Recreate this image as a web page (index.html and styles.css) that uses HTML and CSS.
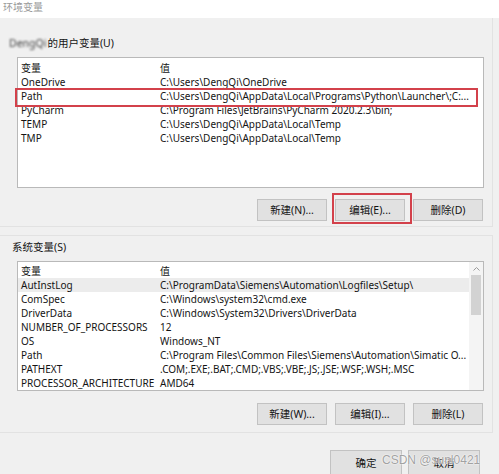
FILE: index.html
```html
<!DOCTYPE html>
<html lang="zh-CN">
<head>
<meta charset="utf-8">
<title>环境变量</title>
<link rel="stylesheet" href="styles.css">
</head>
<body>
<div class="titlebar">环境变量</div>

<section class="group group-user">
  <div class="glabel"><span class="blurname">DengQi</span>的用户变量(U)</div>
  <div class="list list-user">
    <div class="rows">
      <div class="row head"><span>变量</span><span>值</span></div>
      <div class="row"><span>OneDrive</span><span>C:\Users\DengQi\OneDrive</span></div>
      <div class="row marked"><span>Path</span><span>C:\Users\DengQi\AppData\Local\Programs\Python\Launcher\;C:...</span></div>
      <div class="row"><span>PyCharm</span><span>C:\Program Files\JetBrains\PyCharm 2020.2.3\bin;</span></div>
      <div class="row"><span>TEMP</span><span>C:\Users\DengQi\AppData\Local\Temp</span></div>
      <div class="row"><span>TMP</span><span>C:\Users\DengQi\AppData\Local\Temp</span></div>
    </div>
  </div>
  <div class="btns">
    <button class="btn">新建(N)...</button>
    <button class="btn marked-btn">编辑(E)...</button>
    <button class="btn">删除(D)</button>
  </div>
</section>

<section class="group group-sys">
  <div class="glabel">系统变量(S)</div>
  <div class="list list-sys">
    <div class="rows">
      <div class="row head"><span>变量</span><span>值</span></div>
      <div class="row hl"><span>AutInstLog</span><span>C:\ProgramData\Siemens\Automation\Logfiles\Setup\</span></div>
      <div class="row"><span>ComSpec</span><span>C:\Windows\system32\cmd.exe</span></div>
      <div class="row"><span>DriverData</span><span>C:\Windows\System32\Drivers\DriverData</span></div>
      <div class="row"><span>NUMBER_OF_PROCESSORS</span><span>12</span></div>
      <div class="row"><span>OS</span><span>Windows_NT</span></div>
      <div class="row"><span>Path</span><span>C:\Program Files\Common Files\Siemens\Automation\Simatic O...</span></div>
      <div class="row"><span>PATHEXT</span><span>.COM;.EXE;.BAT;.CMD;.VBS;.VBE;.JS;.JSE;.WSF;.WSH;.MSC</span></div>
      <div class="row"><span>PROCESSOR_ARCHITECTURE</span><span>AMD64</span></div>
    </div>
    <div class="scrollbar">
      <div class="sb-arrow"><svg width="7" height="4" viewBox="0 0 7 4"><path d="M0.5 3.5 L3.5 0.5 L6.5 3.5" fill="none" stroke="#9a9a9a" stroke-width="1"/></svg></div>
      <div class="sb-thumb"></div>
    </div>
  </div>
  <div class="btns">
    <button class="btn">新建(W)...</button>
    <button class="btn">编辑(I)...</button>
    <button class="btn">删除(L)</button>
  </div>
</section>

<div class="footer">
  <button class="btn fbtn">确定</button>
  <button class="btn fbtn">取消</button>
</div>

<div class="watermark">CSDN @sunl0421</div>
</body>
</html>
```

FILE: styles.css
```css
* {
  box-sizing: border-box;
  margin: 0;
  padding: 0;
}

body {
  margin: 0;
  width: 499px;
  height: 474px;
  overflow: hidden;
  position: relative;
  background: #f0f0f0;
  font-family: "Noto Sans", "Noto Sans CJK SC", sans-serif;
  font-size: 10px;
  color: #141414;
}

.titlebar {
  height: 18px;
  background: #ffffff;
  padding-left: 3px;
  line-height: 14px;
  font-size: 10px;
  color: #9a9a9a;
}

.group {
  width: 493px;
  border-right: 1px solid #e2e2e2;
  border-bottom: 1px solid #e2e2e2;
}

.group-user {
  height: 209px;
  padding-top: 18px;
}

.group-sys {
  margin-top: 8px;
  border-top: 1px solid #e2e2e2;
  padding-top: 4px;
  height: 198px;
}

.glabel {
  height: 14px;
  line-height: 14px;
  padding-left: 9px;
  font-size: 10.5px;
}

.group-sys .glabel {
  padding-left: 12px;
}

.blurname {
  filter: blur(0.9px);
  color: #444;
  margin-right: 1px;
}

.list {
  margin: 7px 0 0 17px;
  width: 467px;
  background: #ffffff;
  border: 1px solid #b9b9b9;
  display: flex;
}

.list-user {
  height: 131px;
}

.list-sys {
  height: 130px;
}

.rows {
  flex: 1;
  min-width: 0;
}

.list-user .rows {
  padding-top: 3px;
}

.list-sys .rows {
  padding-top: 2px;
}

.row {
  display: grid;
  grid-template-columns: 139px 1fr;
  padding-left: 3px;
  height: 14px;
  line-height: 14px;
  white-space: nowrap;
}

.row.hl {
  background: #ececec;
}

.row.marked {
  position: relative;
}

.row.marked::after {
  content: "";
  position: absolute;
  left: -3px;
  right: 5px;
  top: -1px;
  bottom: -4px;
  border: 2px solid #d3414b;
}

.scrollbar {
  width: 14px;
  background: #f4f4f4;
  display: flex;
  flex-direction: column;
  align-items: center;
}

.sb-arrow {
  height: 13px;
  display: flex;
  align-items: center;
  justify-content: center;
}

.sb-thumb {
  width: 10px;
  height: 40px;
  background: #d2d2d2;
}

.btns {
  display: flex;
  justify-content: flex-end;
  gap: 8px;
  padding-right: 9px;
}

.group-user .btns {
  margin-top: 11px;
}

.group-sys .btns {
  margin-top: 12px;
}

.btn {
  width: 70px;
  height: 22px;
  background: #e1e1e1;
  border: 1px solid #c2c2c2;
  font-family: inherit;
  font-size: 10.5px;
  color: #141414;
  line-height: 18px;
}

.marked-btn {
  position: relative;
}

.marked-btn::after {
  content: "";
  position: absolute;
  left: -4px;
  right: -8px;
  top: -7px;
  bottom: -4px;
  border: 2px solid #d3414b;
  z-index: 2;
}

.footer {
  display: flex;
  justify-content: flex-end;
  gap: 6px;
  padding-right: 19px;
  margin-top: 17px;
}

.fbtn {
  width: 72px;
  height: 26px;
}

.watermark {
  position: absolute;
  left: 382px;
  top: 453px;
  font-family: "Liberation Sans", sans-serif;
  font-size: 12px;
  color: rgba(150, 150, 150, 0.9);
  text-shadow: 0 0 2px #ffffff, 0 0 1px #ffffff;
  white-space: nowrap;
}
```
